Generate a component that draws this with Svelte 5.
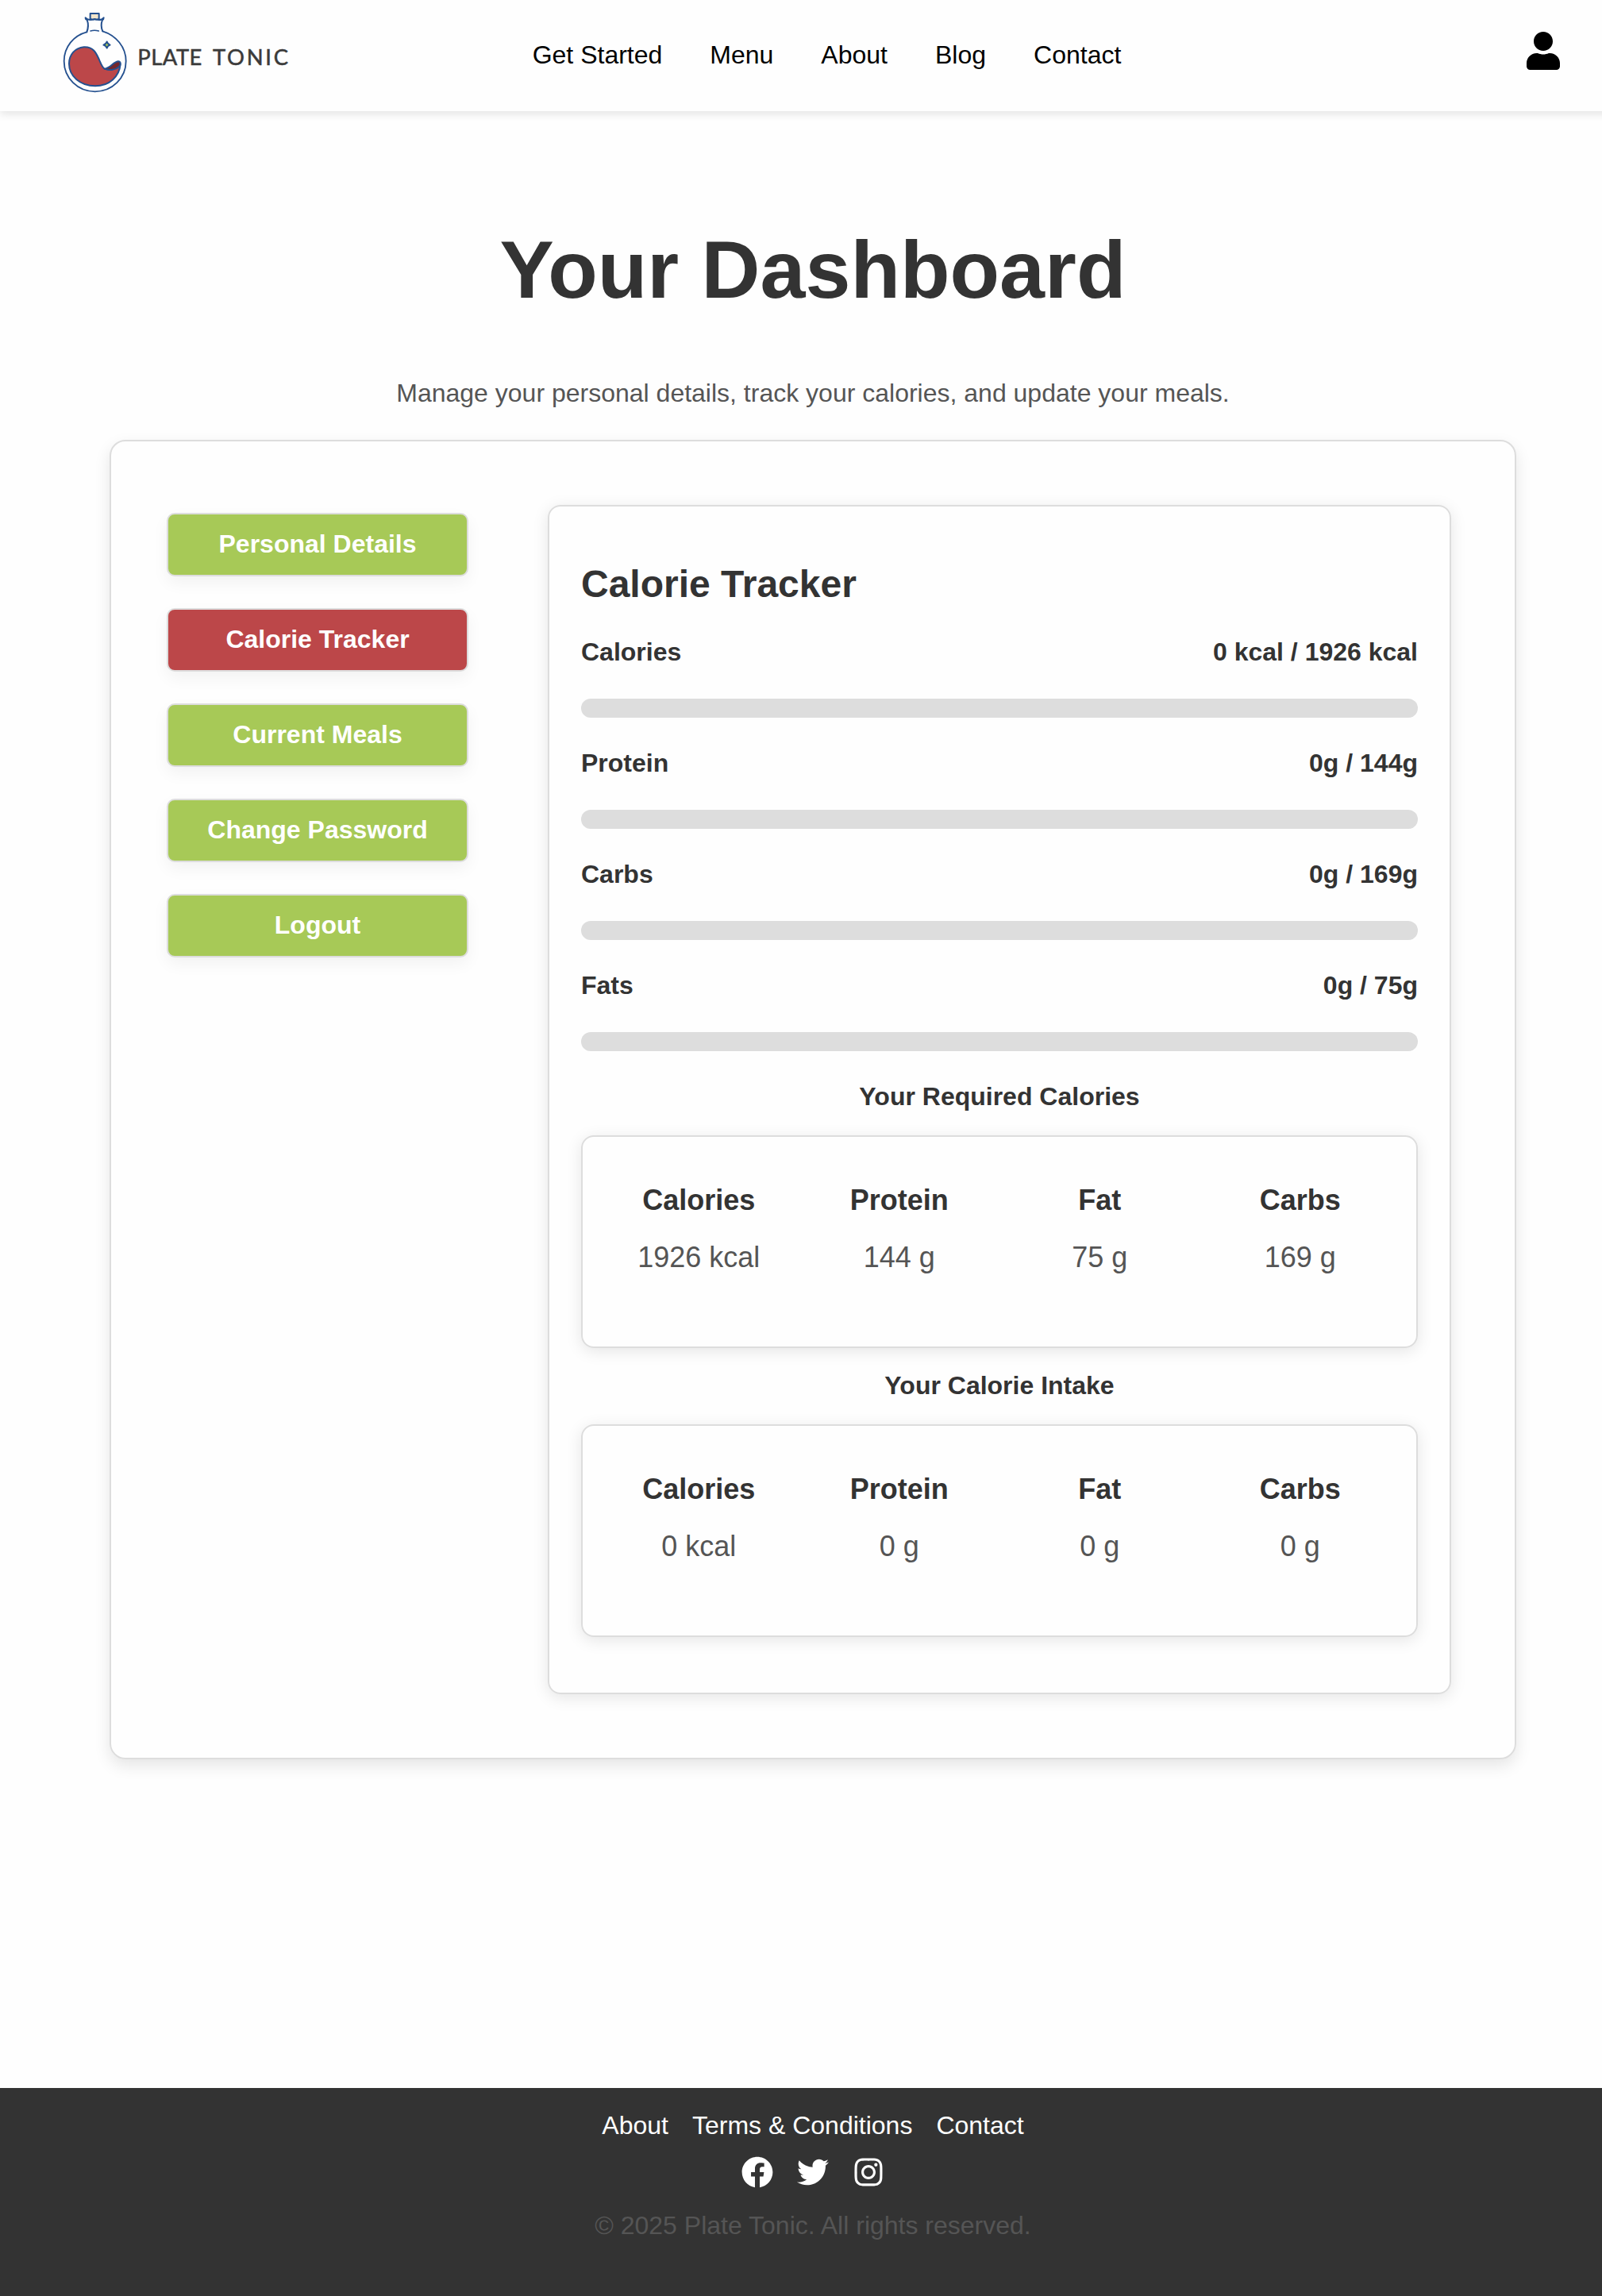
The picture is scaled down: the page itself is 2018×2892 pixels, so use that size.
<script>
  const navLinks = ['Get Started', 'Menu', 'About', 'Blog', 'Contact'];
  const footerLinks = ['About', 'Terms & Conditions', 'Contact'];

  const tabs = ['Personal Details', 'Calorie Tracker', 'Current Meals', 'Change Password', 'Logout'];
  let activeTab = $state('Calorie Tracker');

  const progress = [
    { label: 'Calories', text: '0 kcal / 1926 kcal', value: 0, max: 1926 },
    { label: 'Protein', text: '0g / 144g', value: 0, max: 144 },
    { label: 'Carbs', text: '0g / 169g', value: 0, max: 169 },
    { label: 'Fats', text: '0g / 75g', value: 0, max: 75 }
  ];

  const summaries = [
    {
      title: 'Your Required Calories',
      items: [['Calories', '1926 kcal'], ['Protein', '144 g'], ['Fat', '75 g'], ['Carbs', '169 g']]
    },
    {
      title: 'Your Calorie Intake',
      items: [['Calories', '0 kcal'], ['Protein', '0 g'], ['Fat', '0 g'], ['Carbs', '0 g']]
    }
  ];

  const socials = [
    {
      name: 'Facebook',
      box: '0 0 512 512',
      path: 'M504 256C504 119 393 8 256 8S8 119 8 256c0 123.78 90.69 226.38 209.25 245V327.69h-63V256h63v-54.64c0-62.15 37-96.48 93.67-96.48 27.14 0 55.52 4.84 55.52 4.84v61h-31.28c-30.8 0-40.41 19.12-40.41 38.73V256h68.78l-11 71.69h-57.78V501C413.31 482.38 504 379.78 504 256z'
    },
    {
      name: 'Twitter',
      box: '0 0 512 512',
      path: 'M459.37 151.716c.325 4.548.325 9.097.325 13.645 0 138.72-105.583 298.558-298.558 298.558-59.452 0-114.68-17.219-161.137-47.106 8.447.974 16.568 1.299 25.34 1.299 49.055 0 94.213-16.568 130.274-44.832-46.132-.975-84.792-31.188-98.112-72.772 6.498.974 12.995 1.624 19.818 1.624 9.421 0 18.843-1.3 27.614-3.573-48.081-9.747-84.143-51.98-84.143-102.985v-1.299c13.969 7.797 30.214 12.67 47.431 13.319-28.264-18.843-46.781-51.005-46.781-87.391 0-19.492 5.197-37.36 14.294-52.954 51.655 63.675 129.3 105.258 216.365 109.807-1.624-7.797-2.599-15.918-2.599-24.04 0-57.828 46.782-104.934 104.934-104.934 30.213 0 57.502 12.67 76.67 33.137 23.715-4.548 46.456-13.32 66.599-25.34-7.798 24.366-24.366 44.833-46.132 57.827 21.117-2.273 41.584-8.122 60.426-16.243-14.292 20.791-32.161 39.308-52.628 54.253z'
    },
    {
      name: 'Instagram',
      box: '0 0 448 512',
      path: 'M224.1 141c-63.6 0-114.9 51.3-114.9 114.9s51.3 114.9 114.9 114.9S339 319.5 339 255.9 287.7 141 224.1 141zm0 189.6c-41.1 0-74.7-33.5-74.7-74.7s33.5-74.7 74.7-74.7 74.7 33.5 74.7 74.7-33.6 74.7-74.7 74.7zm146.4-194.3c0 14.9-12 26.8-26.8 26.8-14.9 0-26.8-12-26.8-26.8s12-26.8 26.8-26.8 26.8 12 26.8 26.8zm76.1 27.2c-1.7-35.9-9.9-67.7-36.2-93.9-26.2-26.2-58-34.4-93.9-36.2-37-2.1-147.9-2.1-184.9 0-35.8 1.7-67.6 9.9-93.9 36.1s-34.4 58-36.2 93.9c-2.1 37-2.1 147.9 0 184.9 1.7 35.9 9.9 67.7 36.2 93.9s58 34.4 93.9 36.2c37 2.1 147.9 2.1 184.9 0 35.9-1.7 67.7-9.9 93.9-36.2 26.2-26.2 34.4-58 36.2-93.9 2.1-37 2.1-147.8 0-184.9zM398.8 388c-7.8 19.6-22.9 34.7-42.6 42.6-29.5 11.7-99.5 9-132.1 9s-102.7 2.6-132.1-9c-19.6-7.8-34.7-22.9-42.6-42.6-11.7-29.5-9-99.5-9-132.1s-2.6-102.7 9-132.1c7.8-19.6 22.9-34.7 42.6-42.6 29.5-11.7 99.5-9 132.1-9s102.7-2.6 132.1 9c19.6 7.8 34.7 22.9 42.6 42.6 11.7 29.5 9 99.5 9 132.1s2.7 102.7-9 132.1z'
    }
  ];
</script>

<div class="page">
  <header>
    <svg class="logo" viewBox="54 42 870 312" role="img" aria-label="Plate Tonic">
      <g fill="none" stroke="#24508f" stroke-linecap="round" stroke-linejoin="round">
        <path stroke-width="5.5" d="M148 121C98 134 62 178 62 231c0 64 52 115 117 115s117-51 117-115c0-53-37-97-88-113" />
        <path stroke-width="6" d="M148 121c6-16 7-30 1-46-4-1-6-4-6-8 6 7 12 8 20 8 5-3 11 0 15-3 4 3 10 0 15 3 8 0 14-1 19-8 0 4-2 7-5 8-6 16-6 28 1 43" />
        <path stroke-width="4.5" d="M162 117c10-3 20-3 31 0" />
        <path fill="#f1e4cb" stroke-width="6" d="M161 72V51h33v21c-5 2-11 2-16 0-6 2-11 2-17 0z" />
        <path fill="#bc4749" stroke-width="6" d="M81 241c0-34 22-60 56-63 38-2 48 26 58 48 6 14 11 29 20 34 22 8 49-1 60-18-4 48-42 83-95 83-58 0-99-38-99-84z" />
        <path fill="#74262c" stroke-width="6" d="M215 260c22-3 32-25 51-28 12-1 11 14 3 21-12 11-34 14-54 7z" />
        <path fill="#a7c957" stroke-width="5.5" d="M224 157c2 8 4 10 12 13-8 2-10 4-12 12-3-8-5-10-13-12 8-3 10-5 13-13z" />
      </g>
      <g class="wordmark">
        <text x="340" y="245" textLength="243" lengthAdjust="spacing">PLATE</text>
        <text x="624" y="245" textLength="285" lengthAdjust="spacing">TONIC</text>
      </g>
    </svg>
    <nav>
      {#each navLinks as link}
        <a href="#top">{link}</a>
      {/each}
    </nav>
    <svg class="user" viewBox="0 0 448 512" role="img" aria-label="Account">
      <path d="M224 256c70.7 0 128-57.3 128-128S294.7 0 224 0 96 57.3 96 128s57.3 128 128 128zm89.6 32h-16.7c-22.2 10.2-46.9 16-72.9 16s-50.6-5.8-72.9-16h-16.7C60.2 288 0 348.2 0 422.4V464c0 26.5 21.5 48 48 48h352c26.5 0 48-21.5 48-48v-41.6c0-74.2-60.2-134.4-134.4-134.4z" />
    </svg>
  </header>

  <main>
    <h1>Your Dashboard</h1>
    <p class="intro">Manage your personal details, track your calories, and update your meals.</p>

    <div class="dashboard">
      <aside>
        {#each tabs as tab}
          <button class:active={tab === activeTab} onclick={() => (activeTab = tab)}>{tab}</button>
        {/each}
      </aside>

      <section class="panel">
        <h2>Calorie Tracker</h2>
        {#each progress as row}
          <div class="progress">
            <div class="labels"><span>{row.label}</span><span>{row.text}</span></div>
            <div class="track"><div class="fill" style="width: {(row.value / row.max) * 100}%"></div></div>
          </div>
        {/each}

        {#each summaries as summary}
          <h3>{summary.title}</h3>
          <div class="card">
            {#each summary.items as [name, amount]}
              <div class="cell"><strong>{name}</strong><span>{amount}</span></div>
            {/each}
          </div>
        {/each}
      </section>
    </div>
  </main>

  <footer>
    <div class="links">
      {#each footerLinks as link}
        <a href="#top">{link}</a>
      {/each}
    </div>
    <div class="socials">
      {#each socials as icon}
        <svg viewBox={icon.box} role="img" aria-label={icon.name}><path d={icon.path} /></svg>
      {/each}
    </div>
    <p>© 2025 Plate Tonic. All rights reserved.</p>
  </footer>
</div>

<style>
  :global(body) {
    margin: 0;
    overflow-x: hidden;
    background: #fefefe;
  }

  .page {
    display: flex;
    flex-direction: column;
    width: 2048px;
    height: 2892px;
    overflow: hidden;
    font-family: 'Liberation Sans', Arial, sans-serif;
    font-size: 32px;
    line-height: 48px;
    color: #333;
  }

  .page * {
    box-sizing: border-box;
  }

  a {
    color: inherit;
    text-decoration: none;
  }

  h1, h2, h3, p {
    margin: 0;
  }

  header {
    display: flex;
    flex: none;
    align-items: flex-start;
    justify-content: space-between;
    height: 140px;
    padding: 14px 83px 0 78px;
    background: #fefefe;
    box-shadow: 0 4px 10px rgba(0, 0, 0, 0.1);
  }

  .logo {
    width: 290px;
    height: 104px;
  }

  .wordmark {
    fill: #3a3a3a;
    stroke: #3a3a3a;
    stroke-width: 1.6;
    font-family: Lato, sans-serif;
    font-size: 82px;
  }

  nav {
    display: flex;
    gap: 60px;
    margin: 31px 208px 0 0;
    color: #000;
  }

  .user {
    width: 42px;
    height: 48px;
    margin-top: 26px;
  }

  main {
    flex: 1;
    padding: 140px 138px 0;
  }

  h1 {
    font-size: 102.4px;
    line-height: 120px;
    text-align: center;
  }

  .intro {
    margin: 71px 0 35px;
    color: #555;
    text-align: center;
  }

  .dashboard {
    display: flex;
    gap: 100px;
    padding: 80px 80px 80px 70px;
    border: 2px solid #ddd;
    border-radius: 20px;
    box-shadow: 0 8px 20px rgba(0, 0, 0, 0.1);
  }

  aside {
    display: flex;
    flex: none;
    flex-direction: column;
    gap: 40px;
    width: 380px;
    padding-top: 10px;
  }

  button {
    height: 80px;
    padding: 0 0 3px;
    border: 2px solid #ddd;
    border-radius: 10px;
    background: #a7c957;
    box-shadow: 0 8px 20px rgba(0, 0, 0, 0.05);
    color: #fff;
    font: bold 32px/36px 'Liberation Sans', Arial, sans-serif;
    cursor: pointer;
  }

  button.active {
    background: #bc4749;
  }

  .panel {
    flex: 1;
    padding: 40px 40px 70px;
    border: 2px solid #ddd;
    border-radius: 16px;
    box-shadow: 0 4px 20px rgba(0, 0, 0, 0.1);
  }

  h2 {
    margin: 28px 0 31px;
    font-size: 48px;
    line-height: 60px;
  }

  .progress {
    margin-bottom: 33px;
  }

  .labels {
    display: flex;
    justify-content: space-between;
    margin-bottom: 35px;
    font-weight: bold;
  }

  .track {
    height: 24px;
    overflow: hidden;
    border-radius: 12px;
    background: #ddd;
  }

  .fill {
    height: 100%;
    background: #a7c957;
  }

  h3 {
    margin-bottom: 25px;
    font-size: 32px;
    line-height: 48px;
    text-align: center;
  }

  .card {
    display: grid;
    grid-template-columns: repeat(4, 1fr);
    height: 268px;
    padding: 52.5px 20px 0;
    border: 2px solid #ddd;
    border-radius: 16px;
    box-shadow: 0 4px 20px rgba(0, 0, 0, 0.1);
    font-size: 36px;
    line-height: 54px;
    text-align: center;
  }

  .card + h3 {
    margin-top: 23px;
  }

  .cell {
    display: flex;
    flex-direction: column;
    gap: 18px;
  }

  .cell span {
    color: #555;
  }

  footer {
    flex: none;
    height: 262px;
    padding-top: 23px;
    background: #333;
    color: #fff;
    text-align: center;
  }

  .links,
  .socials {
    display: flex;
    justify-content: center;
    gap: 30px;
  }

  .socials {
    margin: 15px 0 23px;
  }

  .socials svg {
    width: 40px;
    height: 40px;
    fill: #fff;
  }

  footer p {
    color: #555;
  }
</style>
